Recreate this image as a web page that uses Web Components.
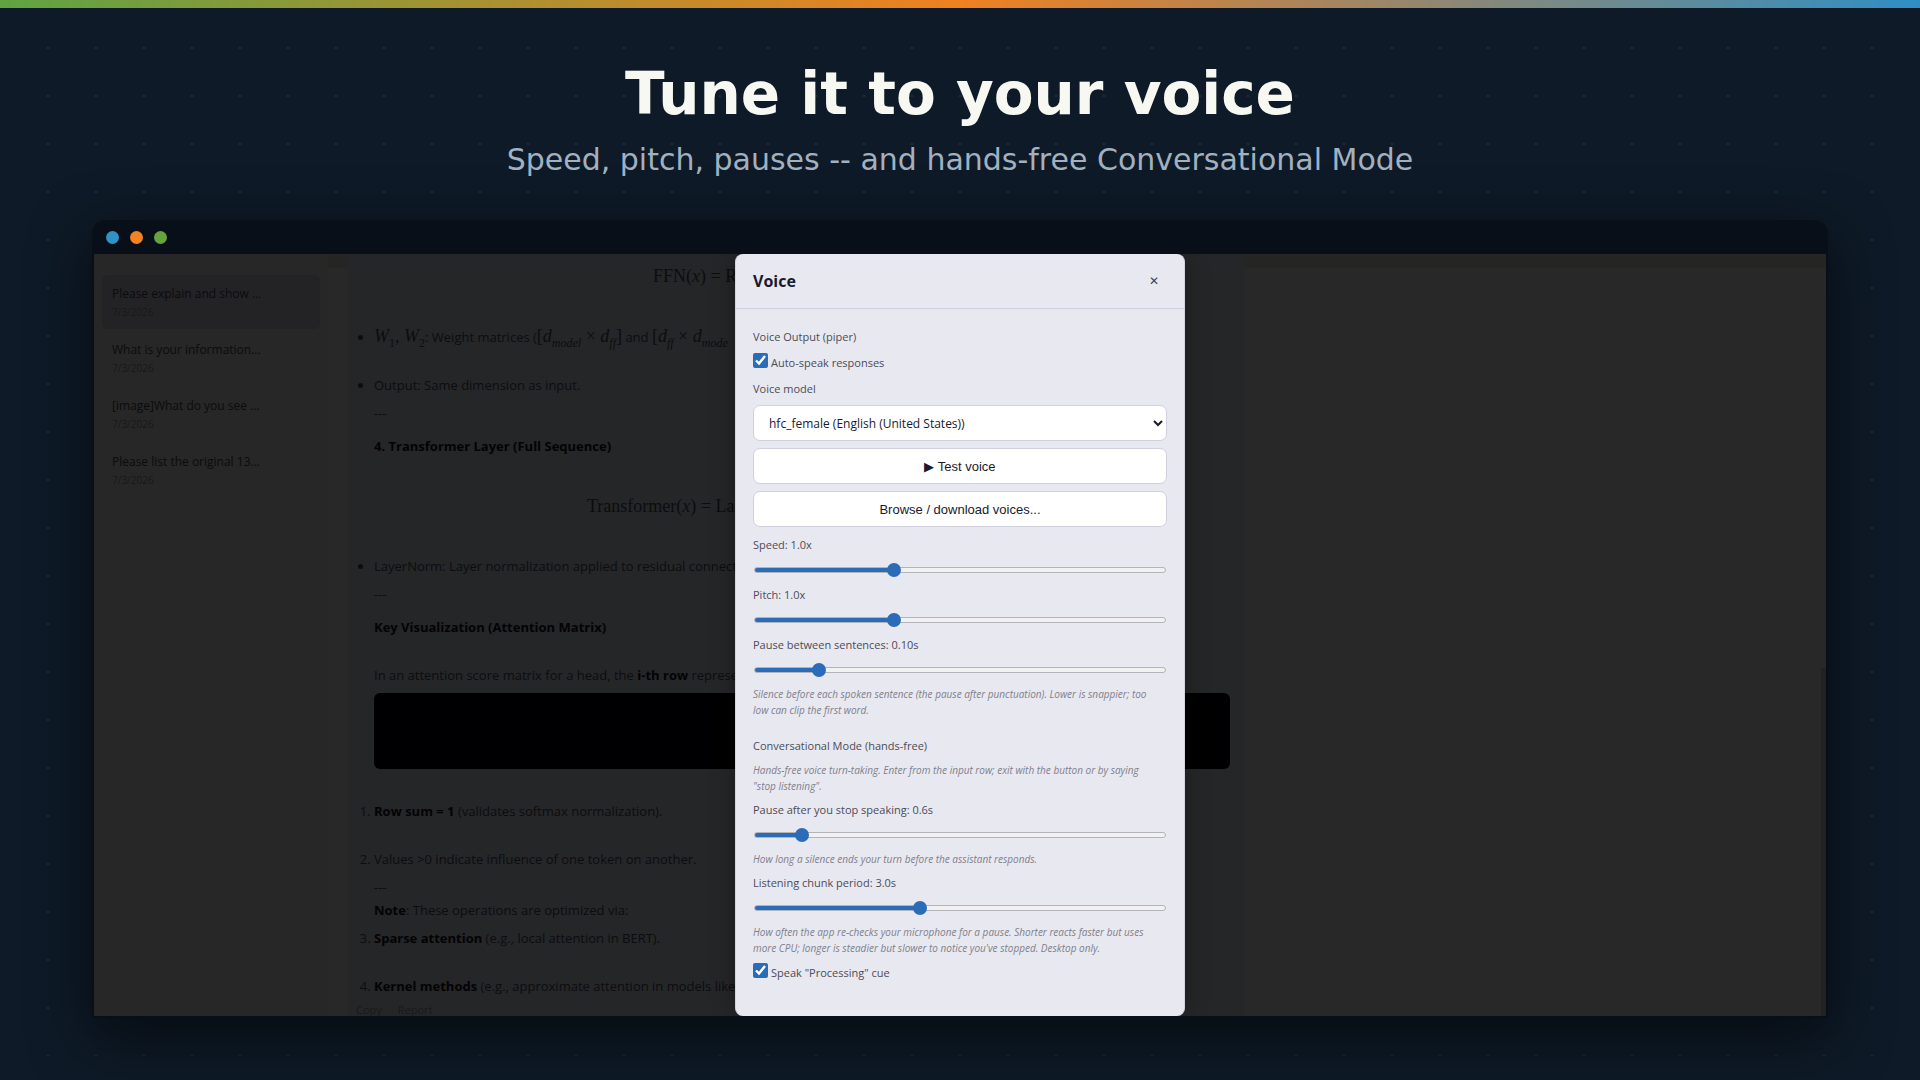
<!DOCTYPE html>
<html lang="en">
  <head>
    <meta charset="utf-8">
    <title>Tune it to your voice</title>
    <style>
      body {
        margin: 0;
        background: #0e1a27;
        font-family: "Open Sans", "Noto Sans", sans-serif;
      }
    </style>
  </head>
  <body>
    <template id="promoPage">
      <style>
        :host {
          display: flex;
          flex-direction: column;
          box-sizing: border-box;
          min-height: 100vh;
          padding: 24px;
          background: radial-gradient(circle, #1a2833 1px, transparent 2px) 0 0 / 48px 48px content-box content-box;
        }
        .stripe {
          height: 8px;
          margin: -24px -24px 0;
          background: linear-gradient(90deg, #5fa343, #f08020 50%, #2f8fc4);
        }
        .inner {
          flex: 1;
          display: flex;
          flex-direction: column;
          padding: 0 68px 38px;
        }
        header {
          display: flex;
          flex-direction: column;
          gap: 14px;
          padding: 52px 0 42px;
          font-family: "DejaVu Sans", sans-serif;
          text-align: center;
        }
        h1 {
          margin: 0;
          font-size: 58px;
          line-height: 68px;
          color: #f7f8f2;
        }
        p {
          margin: 0;
          font-size: 30px;
          line-height: 36px;
          color: #a2b1c0;
        }
      </style>
      <div class="stripe"></div>
      <div class="inner">
        <header>
          <h1><slot name="title"></slot></h1>
          <p><slot name="subtitle"></slot></p>
        </header>
        <slot></slot>
      </div>
    </template>

    <template id="appWindow">
      <style>
        :host {
          flex: 1;
          display: flex;
          flex-direction: column;
          padding: 0 2px 2px;
          border-radius: 14px 14px 4px 4px;
          background: #090f18;
          box-shadow: 0 18px 60px rgba(0, 0, 0, .6);
        }
        .bar {
          display: flex;
          align-items: center;
          gap: 11px;
          height: 34px;
          padding-left: 12px;
        }
        .bar i {
          width: 13px;
          height: 13px;
          border-radius: 50%;
          background: #2f93c6;
        }
        .bar i:nth-child(2) {
          background: #f48320;
        }
        .bar i:nth-child(3) {
          background: #64a33e;
        }
        .content {
          position: relative;
          flex: 1;
          display: flex;
          overflow: hidden;
          background: #282828;
        }
      </style>
      <div class="bar"><i></i><i></i><i></i></div>
      <div class="content"><slot></slot></div>
    </template>

    <template id="chatList">
      <style>
        :host {
          display: flex;
          flex-direction: column;
          gap: 2px;
          box-sizing: border-box;
          width: 234px;
          padding: 21px 8px 0;
          background: #272727;
        }
      </style>
      <slot></slot>
    </template>

    <template id="chatItem">
      <style>
        :host {
          display: block;
          box-sizing: border-box;
          height: 54px;
          padding: 9px 10px 0;
          border-radius: 6px;
          font-size: 12px;
          line-height: 20px;
          color: #0b0b0d;
        }
        :host([selected]) {
          background: #232325;
        }
        time {
          display: block;
          font-size: 10px;
          line-height: 16px;
          color: #18181a;
        }
      </style>
      <slot></slot>
      <time></time>
    </template>

    <template id="chatTranscript">
      <style>
        :host {
          flex: 1;
          display: flex;
          min-width: 0;
          height: 762px;
          padding-left: 20px;
          background: linear-gradient(#252524 14px, transparent 14px);
        }
        .message {
          flex: 0 1 856px;
          min-width: 0;
          padding: 11px 14px 0 26px;
          background: #252628;
          font-size: 13px;
          line-height: 23px;
          color: #0c0d0f;
          white-space: nowrap;
        }
        .scroll {
          align-self: flex-end;
          width: 5px;
          height: 348px;
          margin-left: auto;
          background: #222;
        }
        p, ul, ol {
          margin: 0;
          padding: 0;
        }
        b {
          color: #030305;
        }
        .near {
          margin-top: 5px;
        }
        .head {
          margin-top: 10px;
        }
        .item {
          margin-top: 25px;
        }
        .far {
          margin-top: 37px;
        }
        .math {
          font: 18px/23px "Liberation Serif", serif;
        }
        .ffn {
          padding-left: 279px;
        }
        .layer {
          padding-left: 213px;
        }
        sub {
          font-size: 12px;
          line-height: 0;
        }
        pre {
          height: 76px;
          margin: 6px 0 31px;
          border-radius: 6px;
          background: #000002;
        }
        .actions {
          display: flex;
          gap: 16px;
          margin-left: -18px;
        }
        button {
          padding: 0;
          border: 0;
          background: none;
          font: 11px/23px "Open Sans", sans-serif;
          color: #19191b;
        }
      </style>
      <div class="message">
        <p class="math ffn">FFN(<i>x</i>) = R</p>
        <ul>
          <li class="far"><span class="math"><i>W</i><sub>1</sub>, <i>W</i><sub>2</sub></span>: Weight matrices (<span class="math">[<i>d<sub>model</sub></i> × <i>d<sub>ff</sub></i>]</span> and <span class="math">[<i>d<sub>ff</sub></i> × <i>d<sub>mode</sub></i></span></li>
          <li class="item">Output: Same dimension as input.
            <p class="near">---</p>
            <p class="head"><b>4. Transformer Layer (Full Sequence)</b></p>
            <p class="math layer far">Transformer(<i>x</i>) = La</p>
          </li>
          <li class="far">LayerNorm: Layer normalization applied to residual connecti
            <p class="near">---</p>
            <p class="head"><b>Key Visualization (Attention Matrix)</b></p>
          </li>
        </ul>
        <p class="item">In an attention score matrix for a head, the <b>i-th row</b> represen</p>
        <pre></pre>
        <ol>
          <li><b>Row sum = 1</b> (validates softmax normalization).</li>
          <li class="item">Values &gt;0 indicate influence of one token on another.
            <p class="near">---</p>
            <p><b>Note</b>: These operations are optimized via:</p>
          </li>
          <li class="near"><b>Sparse attention</b> (e.g., local attention in BERT).</li>
          <li class="item"><b>Kernel methods</b> (e.g., approximate attention in models like S</li>
        </ol>
        <div class="actions"><button>Copy</button><button>Report</button></div>
      </div>
      <div class="scroll"></div>
    </template>

    <template id="voiceDialog">
      <style>
        :host {
          position: absolute;
          inset: 0;
          display: flex;
          justify-content: center;
        }
        section {
          box-sizing: border-box;
          width: 450px;
          border: 1px solid #d5d5e2;
          border-width: 0 1px;
          border-radius: 8px;
          background: #e8e8f0;
          box-shadow: 0 0 24px rgba(0, 0, 0, .3);
          color: #4c4c57;
        }
        header {
          display: flex;
          align-items: center;
          justify-content: space-between;
          height: 54px;
          padding: 0 25px 0 17px;
          border-bottom: 1px solid #cfd0e0;
        }
        h2 {
          margin: 0;
          font-size: 16px;
          line-height: 22px;
          color: #1a1a2e;
        }
        .close {
          padding: 0;
          border: 0;
          background: none;
          font: 12px/22px "DejaVu Sans", sans-serif;
          color: #44444e;
        }
        .body {
          display: flex;
          flex-direction: column;
          gap: 7px;
          padding: 19px 17px 32px;
          font-size: 11px;
          line-height: 18px;
        }
        .controls {
          display: flex;
          flex-direction: column;
          gap: 7px;
          margin-bottom: 2px;
        }
        h3 {
          margin: 0;
          font: inherit;
        }
        h3.next {
          margin-top: 12px;
        }
        p {
          margin: 0;
          font-size: 10px;
          line-height: 16px;
          font-style: italic;
          color: #80808d;
        }
        select, .body button {
          box-sizing: border-box;
          width: 100%;
          height: 36px;
          border: 1px solid #d0d0e0;
          border-radius: 7px;
          background: #fff;
          font: 13px "Liberation Sans", sans-serif;
          color: #1a1a2e;
        }
        select {
          padding: 0 0 0 11px;
          font: 12px "Open Sans", sans-serif;
        }
      </style>
      <section role="dialog" aria-labelledby="heading">
        <header>
          <h2 id="heading">Voice</h2>
          <button class="close" aria-label="Close">✕</button>
        </header>
        <div class="body">
          <h3>Voice Output (piper)</h3>
          <check-field>Auto-speak responses</check-field>
          <label for="model">Voice model</label>
          <div class="controls">
            <select id="model">
              <option>hfc_female (English (United States))</option>
            </select>
            <button>▶ Test voice</button>
            <button>Browse / download voices...</button>
          </div>
          <range-field min="0.5" max="2" value="1">Speed: 1.0x</range-field>
          <range-field min="0.5" max="2" value="1">Pitch: 1.0x</range-field>
          <range-field min="0" max="0.7" value="0.1">Pause between sentences: 0.10s</range-field>
          <p>Silence before each spoken sentence (the pause after punctuation). Lower is snappier; too<br>low can clip the first word.</p>
          <h3 class="next">Conversational Mode (hands-free)</h3>
          <p>Hands-free voice turn-taking. Enter from the input row; exit with the button or by saying<br>"stop listening".</p>
          <range-field min="0.3" max="3.3" value="0.6">Pause after you stop speaking: 0.6s</range-field>
          <p>How long a silence ends your turn before the assistant responds.</p>
          <range-field min="1" max="6" value="3">Listening chunk period: 3.0s</range-field>
          <p>How often the app re-checks your microphone for a pause. Shorter reacts faster but uses<br>more CPU; longer is steadier but slower to notice you've stopped. Desktop only.</p>
          <check-field>Speak "Processing" cue</check-field>
        </div>
      </section>
    </template>

    <template id="checkField">
      <style>
        :host {
          display: block;
        }
        label {
          display: flex;
          gap: 3px;
          line-height: 20px;
        }
        input {
          width: 15px;
          height: 15px;
          margin: 0;
          accent-color: #2b6cb8;
        }
      </style>
      <label><input type="checkbox" checked><span><slot></slot></span></label>
    </template>

    <template id="rangeField">
      <style>
        :host {
          display: flex;
          flex-direction: column;
          gap: 7px;
        }
        input {
          -webkit-appearance: none;
          appearance: none;
          height: 18px;
          margin: 0 1px;
          background: none;
        }
        input::-webkit-slider-runnable-track {
          box-sizing: border-box;
          height: 6px;
          border: 1px solid #b4b4b8;
          border-radius: 3px;
          background: linear-gradient(#2b6cb8, #2b6cb8) 0 0 / var(--fill) 100% no-repeat border-box #f1f1f3;
        }
        input::-webkit-slider-thumb {
          -webkit-appearance: none;
          width: 14px;
          height: 14px;
          margin-top: -5px;
          border-radius: 50%;
          background: #2b6cb8;
        }
      </style>
      <label for="range"><slot></slot></label>
      <input id="range" type="range" step="any">
    </template>

    <promo-page>
      <span slot="title">Tune it to your voice</span>
      <span slot="subtitle">Speed, pitch, pauses -- and hands-free Conversational Mode</span>
      <app-window>
        <chat-list>
          <chat-item selected date="7/3/2026">Please explain and show ...</chat-item>
          <chat-item date="7/3/2026">What is your information...</chat-item>
          <chat-item date="7/3/2026">[image]What do you see ...</chat-item>
          <chat-item date="7/3/2026">Please list the original 13...</chat-item>
        </chat-list>
        <chat-transcript></chat-transcript>
        <voice-dialog></voice-dialog>
      </app-window>
    </promo-page>

    <script>
      class TemplateElement extends HTMLElement {
        connectedCallback() {
          this.attachShadow({ mode: 'open' })
          const template = document.getElementById(this.constructor.template)
          this.shadowRoot.appendChild(template.content.cloneNode(true))
          this.ready()
        }
        ready() {}
      }

      customElements.define('check-field', class extends TemplateElement {
        static template = 'checkField'
      })

      customElements.define('range-field', class extends TemplateElement {
        static template = 'rangeField'
        ready() {
          const input = this.shadowRoot.querySelector('input')
          input.min = this.getAttribute('min')
          input.max = this.getAttribute('max')
          input.value = this.getAttribute('value')
          // the coloured part of the track ends under the thumb
          const paint = () => {
            const part = (input.value - input.min) / (input.max - input.min)
            input.style.setProperty('--fill', `calc(7px + (100% - 14px) * ${part})`)
          }
          input.oninput = paint
          paint()
        }
      })

      customElements.define('chat-item', class extends TemplateElement {
        static template = 'chatItem'
        ready() {
          this.shadowRoot.querySelector('time').textContent = this.getAttribute('date')
        }
      })

      customElements.define('chat-list', class extends TemplateElement {
        static template = 'chatList'
      })

      customElements.define('chat-transcript', class extends TemplateElement {
        static template = 'chatTranscript'
      })

      customElements.define('voice-dialog', class extends TemplateElement {
        static template = 'voiceDialog'
      })

      customElements.define('app-window', class extends TemplateElement {
        static template = 'appWindow'
      })

      customElements.define('promo-page', class extends TemplateElement {
        static template = 'promoPage'
      })
    </script>
  </body>
</html>
